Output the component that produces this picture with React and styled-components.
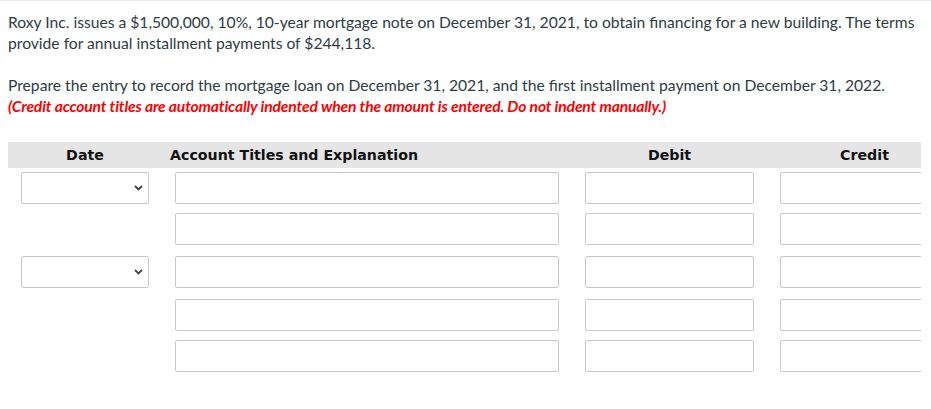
import React from 'react'
import styled, { createGlobalStyle } from 'styled-components'

const Global = createGlobalStyle`
  html, body {
    margin: 0;
    padding: 0;
    background: #fff;
  }
`

const Page = styled.div`
  border-top: 1px solid #e8e8e8;
  padding: 11px 8px 0 8px;
  font-family: Lato, "Open Sans", sans-serif;
  color: #2d3b45;
`

const Para = styled.p`
  margin: 0 0 ${p => (p.$last ? 0 : 21)}px 0;
  font-size: 15.65px;
  line-height: 21px;
`

const Note = styled.span`
  display: block;
  color: #f00;
  font-weight: bold;
  font-style: italic;
  letter-spacing: -0.15px;
`

const TableWrap = styled.div`
  margin-top: 25px;
  width: 913px;
  overflow: hidden;
`

const Grid = styled.div`
  display: grid;
  grid-template-columns: 154px 410px 195px 195px;
  width: 954px;
`

const Head = styled.div`
  background: #e5e5e5;
  height: 26px;
  display: flex;
  align-items: center;
  justify-content: ${p => (p.$left ? 'flex-start' : 'center')};
  padding-left: ${p => (p.$left ? '8px' : '0')};
  font-family: "DejaVu Sans", Verdana, sans-serif;
  font-weight: bold;
  font-size: 14.2px;
  color: #111;
`

const Cell = styled.div`
  padding: ${p => p.$gap}px 13px 0 13px;
  height: 32px;
`

const Field = styled.div`
  width: 100%;
  height: 32px;
  box-sizing: border-box;
  border: 1px solid #c8c8c8;
  border-radius: 2px;
  background: #fff;
`

const Select = styled(Field)`
  display: flex;
  align-items: center;
  justify-content: flex-end;
  padding-right: 5px;
`

const Chevron = () => (
  <svg width="9" height="6" viewBox="0 0 9 6">
    <path d="M1 1 L4.5 4.5 L8 1" fill="none" stroke="#444" strokeWidth="1.8" />
  </svg>
)

const rows = [
  { date: true, gap: 4 },
  { date: false, gap: 9 },
  { date: true, gap: 11 },
  { date: false, gap: 11 },
  { date: false, gap: 9 },
]

export default function App() {
  return (
    <>
      <Global />
      <Page>
        <Para>
          Roxy Inc. issues a $1,500,000, 10%, 10-year mortgage note on December 31, 2021, to obtain financing for a new building. The terms provide for annual installment payments of $244,118.
        </Para>
        <Para $last>
          Prepare the entry to record the mortgage loan on December 31, 2021, and the first installment payment on December 31, 2022.
          <Note>(Credit account titles are automatically indented when the amount is entered. Do not indent manually.)</Note>
        </Para>
        <TableWrap>
          <Grid>
            <Head>Date</Head>
            <Head $left>Account Titles and Explanation</Head>
            <Head>Debit</Head>
            <Head>Credit</Head>
            {rows.map((r, i) => (
              <React.Fragment key={i}>
                <Cell $gap={r.gap}>
                  {r.date && (
                    <Select>
                      <Chevron />
                    </Select>
                  )}
                </Cell>
                <Cell $gap={r.gap}><Field /></Cell>
                <Cell $gap={r.gap}><Field /></Cell>
                <Cell $gap={r.gap}><Field /></Cell>
              </React.Fragment>
            ))}
          </Grid>
        </TableWrap>
      </Page>
    </>
  )
}
